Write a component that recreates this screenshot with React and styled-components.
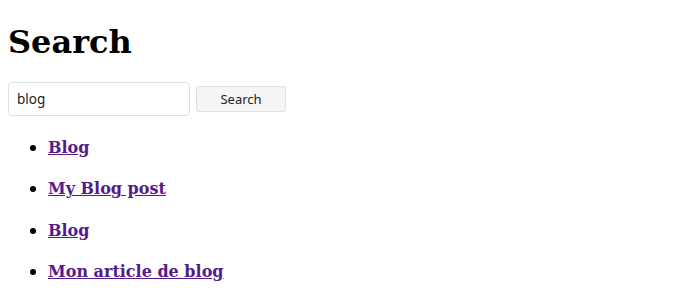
import React from 'react';
import styled, {createGlobalStyle} from 'styled-components';

const GlobalStyle = createGlobalStyle`
    body {
        margin: 8px;
        font-family: 'DejaVu Serif', serif;
        background: #fff;
        color: #000;
    }
`;

const Title = styled.h1`
    font-size: 32px;
    font-weight: bold;
    margin: 14.5px 0 21.44px;
`;

const SearchForm = styled.form`
    display: flex;
    align-items: center;
    gap: 6px;
`;

const SearchInput = styled.input`
    box-sizing: border-box;
    width: 182px;
    height: 34px;
    padding: 0 8px;
    border: 1px solid #e0e0e0;
    border-radius: 4px;
    font-family: 'Noto Sans', sans-serif;
    font-size: 13.5px;
    color: #222;
    outline: none;
`;

const SearchButton = styled.button`
    box-sizing: border-box;
    width: 90px;
    height: 26px;
    border: 1px solid #e0e0e0;
    border-radius: 3px;
    background: #f5f5f5;
    font-family: 'Noto Sans', sans-serif;
    font-size: 13px;
    color: #222;
`;

const ResultList = styled.ul`
    margin: 20px 0 16px;
    padding-left: 40px;
    line-height: 18px;
`;

const ResultItem = styled.li`
    font-size: 18.72px;
    &::marker {
        font-size: 18.72px;
    }
`;

const ResultTitle = styled.h3`
    font-size: 18.72px;
    line-height: 20.5px;
    margin: 19px 0;
`;

const ResultLink = styled.a`
    font-size: 16px;
    color: #551a8b;
    text-decoration: underline;
`;

const results = ['Blog', 'My Blog post', 'Blog', 'Mon article de blog'];

const App = () => {
    return (
        <>
            <GlobalStyle />
            <Title>Search</Title>
            <SearchForm onSubmit={e => e.preventDefault()}>
                <SearchInput type="text" defaultValue="blog" />
                <SearchButton type="submit">Search</SearchButton>
            </SearchForm>
            <ResultList>
                {results.map((title, i) =>
                    <ResultItem key={i}>
                        <ResultTitle>
                            <ResultLink href="#">{title}</ResultLink>
                        </ResultTitle>
                    </ResultItem>
                )}
            </ResultList>
        </>
    );
};
export default App;
